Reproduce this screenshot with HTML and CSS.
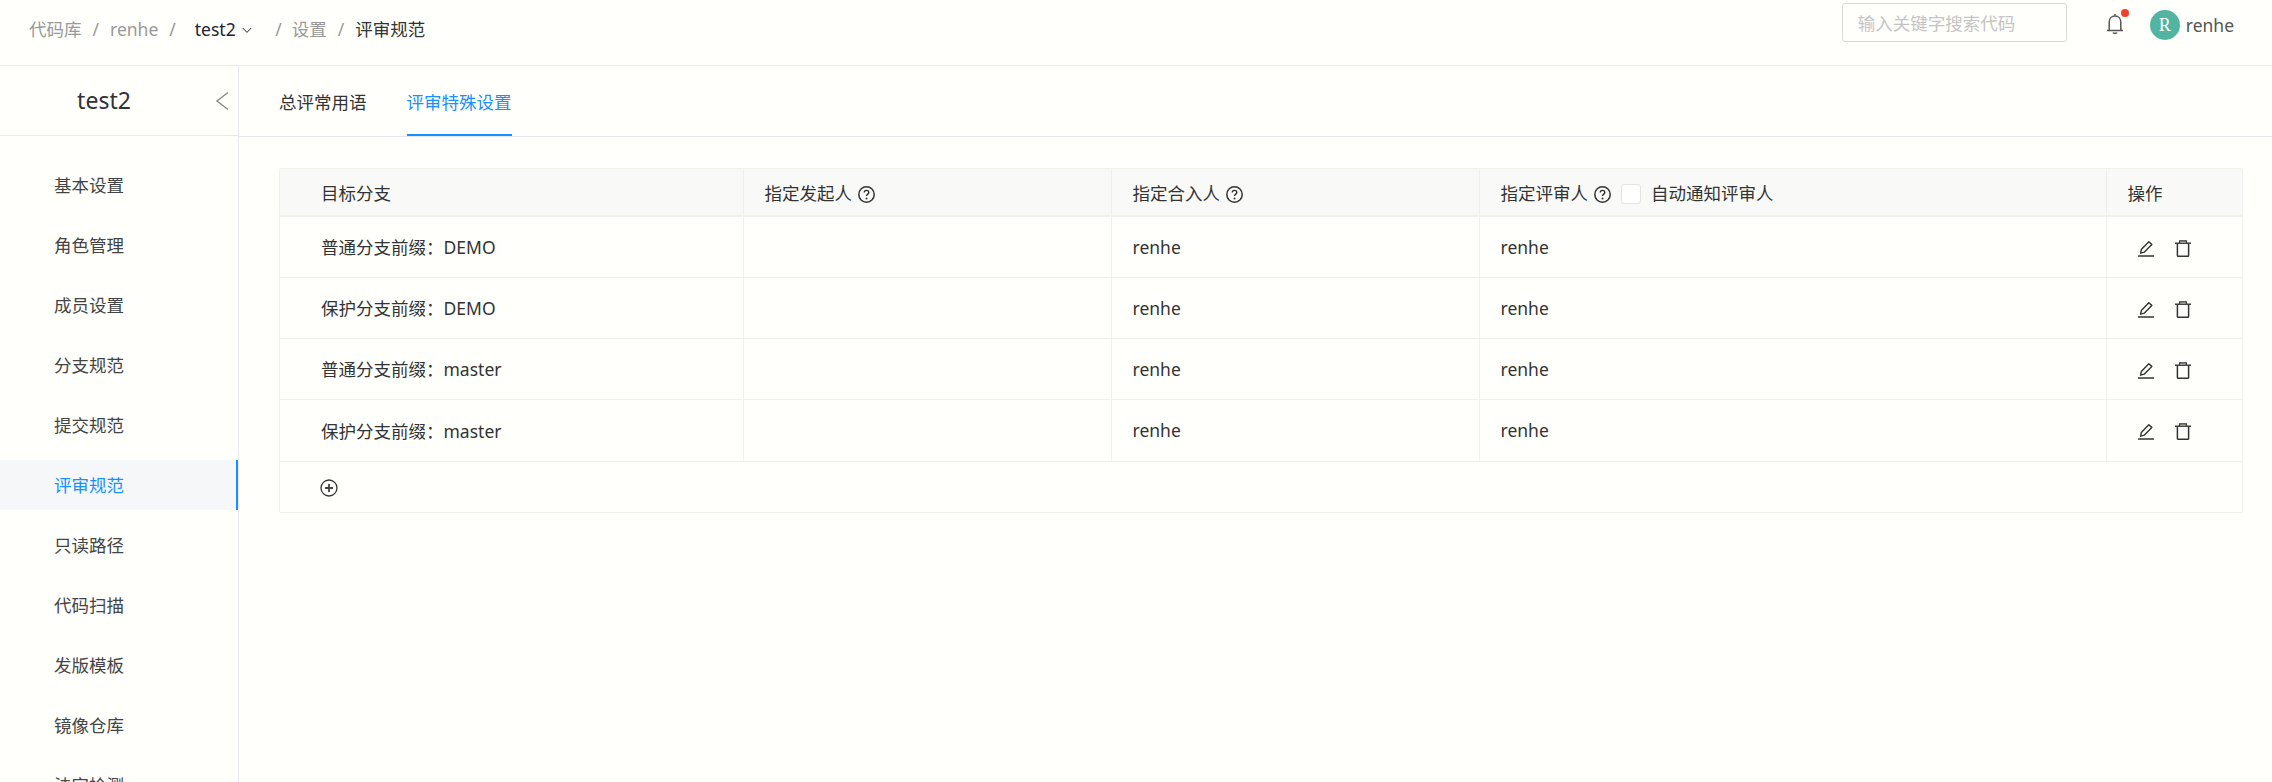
FILE: index.html
```html
<!DOCTYPE html>
<html lang="zh-CN">
<head>
  <meta charset="UTF-8" />
  <title>评审规范</title>
  <link rel="stylesheet" href="styles.css">
</head>
<body>
  <svg class="sprites" width="0" height="0">
    <symbol id="i-help" viewBox="0 0 17 17">
      <circle cx="8.5" cy="8.5" r="7.7" fill="none" stroke="currentColor" stroke-width="1.5"/>
      <path d="M6.200 6.600c0-1.400 1-2.200 2.300-2.200s2.300.8 2.300 2c0 1.700-2.300 1.700-2.300 3.600" fill="none" stroke="currentColor" stroke-width="1.4"/>
      <circle cx="8.5" cy="12.500" r="1" fill="currentColor"/>
    </symbol>
    <symbol id="i-edit" viewBox="0 0 16 17">
      <path d="M0 16h16" fill="none" stroke="currentColor" stroke-width="1.500"/>
      <path d="M2.600 13.200l.7-3.600L10.800 1.800l3 2.600-7.600 7.800z" fill="none" stroke="currentColor" stroke-width="1.400" stroke-linejoin="round"/>
    </symbol>
    <symbol id="i-trash" viewBox="0 0 16 17">
      <path d="M0 3.200h16" fill="none" stroke="currentColor" stroke-width="1.400"/>
      <path d="M4.600 3V.8h6.800V3" fill="#999" stroke="currentColor" stroke-width="1.100"/>
      <path d="M2.400 3.200v12.200c0 .5.3.8.8.8h9.600c.5 0 .8-.3.8-.8V3.200" fill="none" stroke="currentColor" stroke-width="1.500"/>
    </symbol>
  </svg>

  <header class="topbar">
    <nav class="crumbs">
      <span>代码库</span><i>/</i>
      <span>renhe</span><i>/</i>
      <span class="repo">test2
        <svg class="caret" width="10" height="7" viewBox="0 0 10 7"><path d="M.8 1l4.200 4.400L9.200 1" fill="none" stroke="currentColor" stroke-width="1"/></svg>
      </span><i class="after-repo">/</i>
      <span>设置</span><i>/</i>
      <span class="current">评审规范</span>
    </nav>
    <div class="top-right">
      <input class="search" type="text" placeholder="输入关键字搜索代码" />
      <span class="bell">
        <svg width="18" height="22" viewBox="0 0 18 22"><path d="M1 17.500h16M3.200 17.500V9c0-3.400 2.400-6 5.800-6s5.800 2.600 5.800 6v8.500M9 3V1M7 19.500c.5 1.200 3.500 1.200 4 0" fill="none" stroke="#555" stroke-width="1.500"/></svg>
        <b class="dot"></b>
      </span>
      <span class="avatar">R</span>
      <span class="user">renhe</span>
    </div>
  </header>

  <div class="main">
    <aside class="sidebar">
      <div class="side-title">
        <span>test2</span>
        <svg class="collapse" width="14" height="20" viewBox="0 0 14 20"><path d="M13 1.500L2 10l11 8.500" fill="none" stroke="#888" stroke-width="1.400"/></svg>
      </div>
      <ul class="side-menu">
        <li>基本设置</li>
        <li>角色管理</li>
        <li>成员设置</li>
        <li>分支规范</li>
        <li>提交规范</li>
        <li class="active">评审规范</li>
        <li>只读路径</li>
        <li>代码扫描</li>
        <li>发版模板</li>
        <li>镜像仓库</li>
        <li>法定检测</li>
      </ul>
    </aside>

    <section class="content">
      <div class="tabs">
        <a>总评常用语</a>
        <a class="active">评审特殊设置</a>
      </div>
      <div class="panel">
        <table class="rules">
          <colgroup>
            <col class="c1"><col class="c2"><col class="c3"><col class="c4"><col class="c5">
          </colgroup>
          <thead>
            <tr>
              <th class="first">目标分支</th>
              <th>指定发起人<svg class="help"><use href="#i-help"/></svg></th>
              <th>指定合入人<svg class="help"><use href="#i-help"/></svg></th>
              <th>指定评审人<svg class="help"><use href="#i-help"/></svg><span class="check"></span><span>自动通知评审人</span></th>
              <th>操作</th>
            </tr>
          </thead>
          <tbody>
            <tr>
              <td class="first">普通分支前缀：DEMO</td><td></td><td>renhe</td><td>renhe</td>
              <td><svg class="op"><use href="#i-edit"/></svg><svg class="op"><use href="#i-trash"/></svg></td>
            </tr>
            <tr>
              <td class="first">保护分支前缀：DEMO</td><td></td><td>renhe</td><td>renhe</td>
              <td><svg class="op"><use href="#i-edit"/></svg><svg class="op"><use href="#i-trash"/></svg></td>
            </tr>
            <tr>
              <td class="first">普通分支前缀：master</td><td></td><td>renhe</td><td>renhe</td>
              <td><svg class="op"><use href="#i-edit"/></svg><svg class="op"><use href="#i-trash"/></svg></td>
            </tr>
            <tr>
              <td class="first">保护分支前缀：master</td><td></td><td>renhe</td><td>renhe</td>
              <td><svg class="op"><use href="#i-edit"/></svg><svg class="op"><use href="#i-trash"/></svg></td>
            </tr>
          </tbody>
        </table>
        <div class="add-row">
          <svg width="18" height="18" viewBox="0 0 18 18"><circle cx="9" cy="9" r="8" fill="none" stroke="#333" stroke-width="1.300"/><path d="M9 5v8M5 9h8" fill="none" stroke="#444" stroke-width="1.800"/></svg>
        </div>
      </div>
    </section>
  </div>
</body>
</html>
```

FILE: styles.css
```css
* {
  box-sizing: border-box;
}
html, body {
  height: 100%;
}
body {
  margin: 0;
  display: flex;
  flex-direction: column;
  overflow: hidden;
  background: #fffffc;
  color: #333;
  font-family: "Noto Sans", "Noto Sans CJK SC", sans-serif;
  font-size: 17.5px;
}
.sprites {
  position: absolute;
}

/* top bar */
.topbar {
  flex: none;
  height: 66px;
  padding: 0 38px 0 29px;
  display: flex;
  justify-content: space-between;
  border-bottom: 1px solid #e8e9eb;
}
.crumbs {
  display: flex;
  align-items: center;
  height: 57px;
  color: #999;
}
.crumbs i {
  font-style: normal;
  margin: 0 11px;
}
.crumbs .repo {
  color: #223;
  margin-left: 8px;
  margin-right: 9px;
}
.crumbs .caret {
  margin-left: 2px;
  vertical-align: 2px;
}
.crumbs .after-repo {
  margin-left: 14px;
  margin-right: 10px;
}
.crumbs .current {
  color: #333;
}
.top-right {
  display: flex;
  align-items: flex-start;
}
.search {
  width: 225px;
  height: 39px;
  margin-top: 3px;
  padding: 0 15px;
  border: 1px solid #d9d9d9;
  border-radius: 3px;
  background: transparent;
  font: inherit;
  outline: none;
}
.search::placeholder {
  color: #c4c4c4;
}
.bell {
  position: relative;
  margin: 13px 0 0 39px;
  width: 18px;
  height: 22px;
}
.bell .dot {
  position: absolute;
  left: 15px;
  top: -4px;
  width: 8px;
  height: 8px;
  border-radius: 50%;
  background: #f5412a;
}
.avatar {
  width: 30px;
  height: 30px;
  margin: 10px 6px 0 26px;
  border-radius: 50%;
  background: #52b5a2;
  color: #fff;
  text-align: center;
  line-height: 30px;
  font-family: "Liberation Serif", serif;
  font-size: 18px;
}
.user {
  margin-top: 10px;
  line-height: 30px;
  color: #555;
}

/* sidebar */
.main {
  flex: 1;
  display: flex;
  min-height: 0;
}
.sidebar {
  flex: none;
  width: 239px;
  border-right: 1px solid #e6e8eb;
}
.side-title {
  position: relative;
  height: 70px;
  border-bottom: 1px solid #e8e9eb;
  text-align: center;
  line-height: 68px;
  font-size: 23px;
  padding-right: 30px;
}
.collapse {
  position: absolute;
  right: 9px;
  top: 25px;
}
.side-menu {
  list-style: none;
  margin: 24px 0 0;
  padding: 0;
}
.side-menu li {
  height: 50px;
  margin-bottom: 10px;
  padding-left: 54px;
  line-height: 50px;
  color: #444;
}
.side-menu li.active {
  background: #f5f7f8;
  border-right: 2px solid #1890ff;
  color: #1890ff;
}

/* tabs */
.content {
  flex: 1;
  min-width: 0;
}
.tabs {
  height: 71px;
  padding-left: 40px;
  display: flex;
  gap: 40px;
  border-bottom: 1px solid #e6e8f0;
}
.tabs a {
  height: 70px;
  line-height: 72px;
  border-bottom: 2px solid transparent;
}
.tabs a.active {
  color: #1890ff;
  border-bottom-color: #1890ff;
}

/* table */
.panel {
  margin: 31px 29px 0 40px;
  border: 1px solid #f0f1ee;
  border-radius: 2px;
}
.rules {
  width: 100%;
  border-collapse: collapse;
  table-layout: fixed;
}
.c1 { width: 463px; }
.c2 { width: 368px; }
.c3 { width: 368px; }
.c4 { width: 627px; }
.rules th {
  height: 47px;
  padding: 0 0 0 21px;
  background: #f9faf8;
  border-left: 1px solid #eeefec;
  border-bottom: 2px solid #f0f1ee;
  text-align: left;
  font-weight: 400;
}
.rules td {
  height: 61px;
  padding: 0 0 0 21px;
  border-left: 1px solid #f0f1ee;
  border-bottom: 1px solid #f0f1ee;
}
.rules tr:last-child td {
  height: 62px;
}
.rules .first {
  border-left: none;
  padding-left: 41px;
}
.help {
  width: 17px;
  height: 17px;
  margin-left: 6px;
  vertical-align: -3px;
  color: #333;
}
.check {
  display: inline-block;
  width: 20px;
  height: 20px;
  margin: 0 10px;
  border: 1px solid #e4e4e4;
  border-radius: 3px;
  vertical-align: -4px;
  background: #fff;
}
.op {
  width: 16px;
  height: 17px;
  margin-left: 10px;
  margin-right: 11px;
  vertical-align: -3px;
  color: #333;
}
.add-row {
  height: 50px;
  padding: 16px 0 0 40px;
}
```
